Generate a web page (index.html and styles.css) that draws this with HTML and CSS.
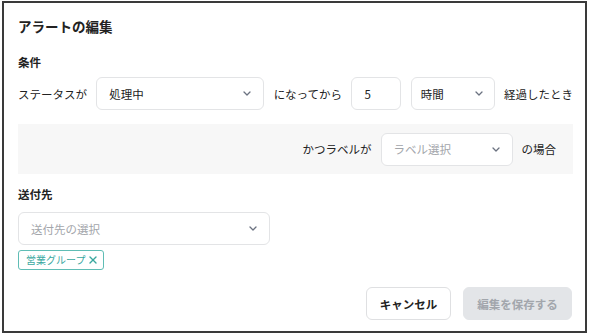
FILE: index.html
```html
<!DOCTYPE html>
<html lang="ja">
<head>
<meta charset="utf-8">
<link rel="stylesheet" href="styles.css">
</head>
<body>
<div class="frame">
  <h1 class="title">アラートの編集</h1>
  <h2 class="section">条件</h2>
  <div class="row">
    <span class="txt">ステータスが</span>
    <div class="select w-status"><span>処理中</span><svg class="chev" viewBox="0 0 8 5" width="8" height="5"><polyline points="1,1 4,4 7,1"/></svg></div>
    <span class="txt">になってから</span>
    <div class="input w-num">5</div>
    <div class="select w-unit"><span>時間</span><svg class="chev" viewBox="0 0 8 5" width="8" height="5"><polyline points="1,1 4,4 7,1"/></svg></div>
    <span class="txt">経過したとき</span>
  </div>
  <div class="band">
    <span class="txt">かつラベルが</span>
    <div class="select w-label"><span class="ph">ラベル選択</span><svg class="chev" viewBox="0 0 8 5" width="8" height="5"><polyline points="1,1 4,4 7,1"/></svg></div>
    <span class="txt">の場合</span>
  </div>
  <h2 class="section section-dest">送付先</h2>
  <div class="select w-dest"><span class="ph">送付先の選択</span><svg class="chev" viewBox="0 0 8 5" width="8" height="5"><polyline points="1,1 4,4 7,1"/></svg></div>
  <div class="tags"><span class="tag">営業グループ<svg class="x" viewBox="0 0 8 8" width="8" height="8"><line x1="1" y1="1" x2="7" y2="7"/><line x1="7" y1="1" x2="1" y2="7"/></svg></span></div>
  <div class="actions">
    <button class="btn btn-cancel">キャンセル</button>
    <button class="btn btn-save">編集を保存する</button>
  </div>
</div>
</body>
</html>
```
FILE: styles.css
```css
* { box-sizing: border-box; }
html, body { margin: 0; padding: 0; background: #fff; }
body {
  font-family: "Noto Sans CJK JP", "Noto Sans", sans-serif;
  color: #222;
  font-size: 11.5px;
}
.frame {
  margin: 1px 0 0 2px;
  width: 585px;
  height: 332px;
  border: 2px solid #3a3a3a;
  padding: 14px 12px 0 14px;
}
.title {
  margin: 0;
  font-size: 13.5px;
  line-height: 18px;
  font-weight: 700;
}
.section {
  margin: 19px 0 0;
  font-size: 11.5px;
  line-height: 16px;
  font-weight: 700;
}
.row {
  margin-top: 7px;
  display: flex;
  align-items: center;
  justify-content: space-between;
  height: 33px;
}
.txt { white-space: nowrap; line-height: 16px; }
.select, .input {
  height: 33px;
  border: 1px solid #e3e4e6;
  border-radius: 6px;
  background: #fff;
  display: flex;
  align-items: center;
  justify-content: space-between;
  padding: 0 12px;
}
.input { justify-content: flex-start; }
.w-status { width: 168px; }
.w-num { width: 50px; }
.w-unit { width: 84px; padding: 0 11px 0 9px; }
.w-label { width: 132px; }
.w-dest { width: 252px; margin-top: 10px; }
.ph { color: #a3a6ab; }
.chev { fill: none; stroke: #6b7280; stroke-width: 1.3; stroke-linecap: round; stroke-linejoin: round; }
.band {
  margin-top: 14px;
  height: 50px;
  background: #f7f7f7;
  display: flex;
  align-items: center;
  justify-content: flex-end;
  gap: 9px;
  padding-right: 17px;
}
.section-dest { margin-top: 12px; }
.tags { margin-top: 5px; display: flex; }
.tag {
  height: 20px;
  border: 1px solid #5fbdb5;
  border-radius: 3px;
  color: #3aa89f;
  font-size: 10px;
  display: inline-flex;
  align-items: center;
  padding: 0 6px 0 7px;
  line-height: 1;
}
.tag .x { margin-left: 4px; fill: none; stroke: #3aa89f; stroke-width: 1.4; stroke-linecap: round; }
.actions {
  margin-top: 17px;
  display: flex;
  justify-content: flex-end;
  gap: 12px;
  padding-right: 1px;
}
.btn {
  font-family: inherit;
  font-size: 11.5px;
  font-weight: 700;
  height: 33px;
  border-radius: 6px;
  padding: 0;
}
.btn-cancel {
  width: 85px;
  background: #fff;
  border: 1px solid #dfe0e2;
  color: #222;
}
.btn-save {
  width: 109px;
  background: #e3e5e8;
  border: 1px solid #e3e5e8;
  color: #a2a6ac;
}
```
